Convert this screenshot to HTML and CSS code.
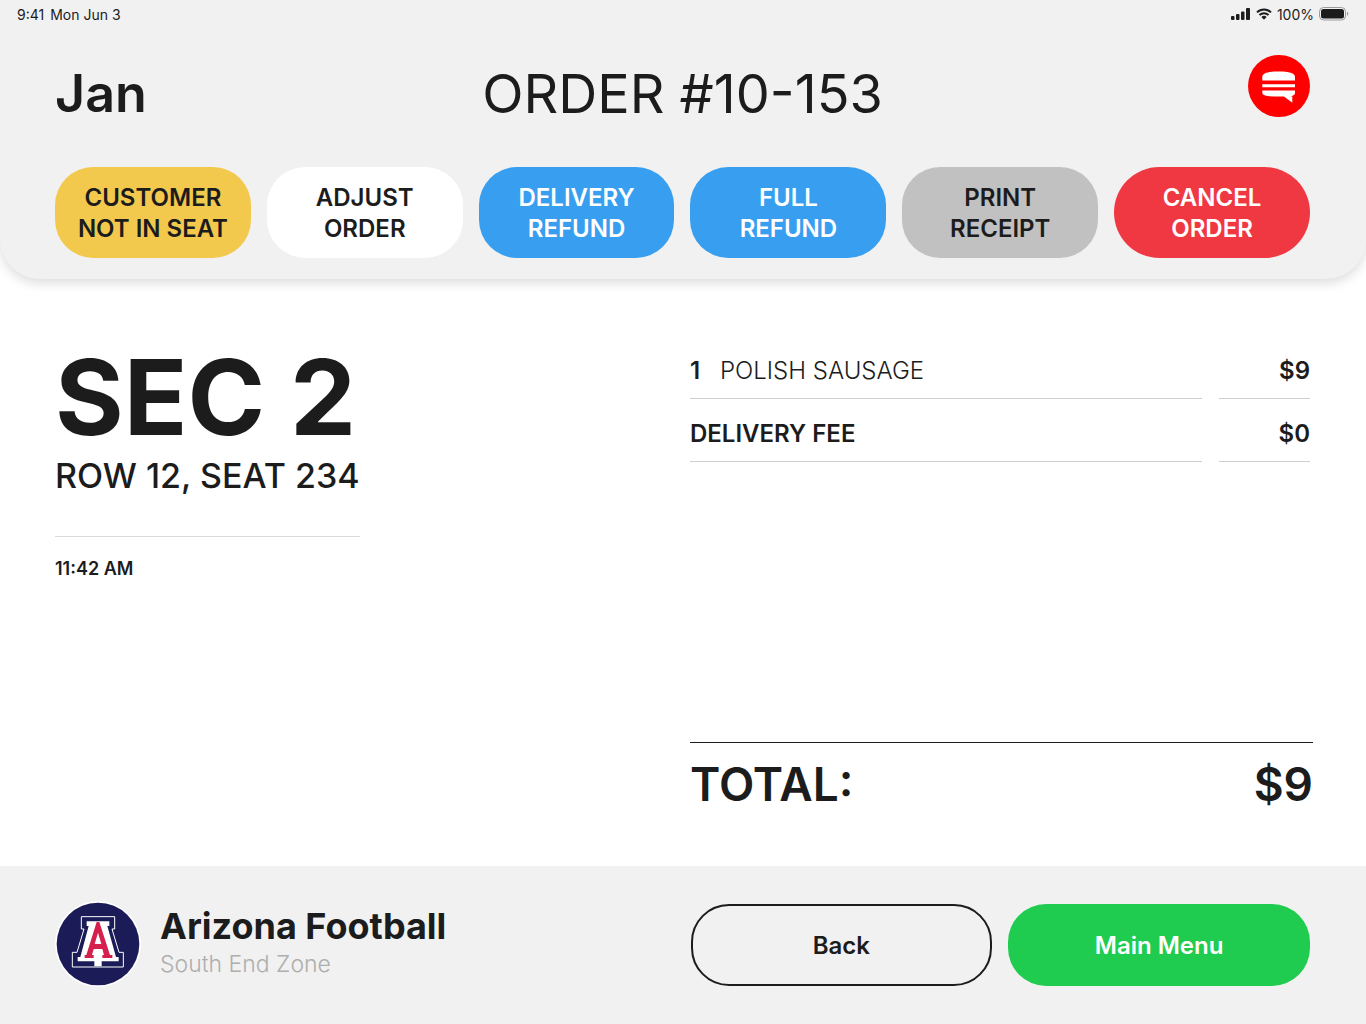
FILE: index.html
```html
<!DOCTYPE html>
<html lang="en">
<head>
<meta charset="utf-8">
<meta name="viewport" content="width=device-width, initial-scale=1">
<title>Order #10-153</title>
<link rel="stylesheet" href="styles.css">
</head>
<body>
<header class="header">
  <div class="status">
    <div class="status-group"><span>9:41</span><span>Mon Jun 3</span></div>
    <div class="status-group status-right">
      <svg class="signal" width="20" height="12" viewBox="0 0 20 12" aria-hidden="true">
        <rect x="0" y="8" width="3.500" height="4" rx="1"/><rect x="5" y="6" width="3.500" height="6" rx="1"/><rect x="10" y="3.500" width="3.500" height="8.500" rx="1"/><rect x="15" y="0" width="4" height="12" rx="1"/>
      </svg>
      <svg class="wifi" width="16" height="12" viewBox="0 0 16 12" aria-hidden="true">
        <path d="M1 4.4a10 10 0 0 1 14 0M3.5 7a6.4 6.4 0 0 1 9 0" fill="none" stroke="currentColor" stroke-width="2"/>
        <path d="M8 11.7 5.4 9a3.8 3.8 0 0 1 5.2 0z"/>
      </svg>
      <span>100%</span>
      <svg class="battery" width="30" height="14" viewBox="0 0 30 14" aria-hidden="true">
        <rect x=".5" y=".5" width="26" height="12.5" rx="4" fill="none" stroke="#9b9b9b"/>
        <rect x="2" y="2" width="23" height="9.500" rx="2.500"/>
        <path d="M28 4.7c1.8.6 1.8 3.5 0 4.1z" fill="#9b9b9b"/>
      </svg>
    </div>
  </div>
  <div class="title-row">
    <h1 class="customer">Jan</h1>
    <h2 class="order-number">ORDER #10-153</h2>
    <svg class="brand" width="62" height="62" viewBox="0 0 62 62" role="img" aria-label="Burger chat">
      <circle cx="31" cy="31" r="31" fill="#ff0000"/>
      <path fill="#fff" d="M14.3 25.500v-3.500c0-4 6-5.500 16.400-5.500S47 18 47 22v3.500zM14.300 29.200H47v3H14.300zM14.300 35.500H47v2c0 2.500-2 3.700-6.300 4.100H44.300V47.700L36 41.500C21 41.800 14.300 41.300 14.300 37.500z"/>
    </svg>
  </div>
  <div class="actions">
    <button class="action yellow" type="button">CUSTOMER<br>NOT IN SEAT</button>
    <button class="action white" type="button">ADJUST<br>ORDER</button>
    <button class="action blue" type="button">DELIVERY<br>REFUND</button>
    <button class="action blue" type="button">FULL<br>REFUND</button>
    <button class="action gray" type="button">PRINT<br>RECEIPT</button>
    <button class="action red" type="button">CANCEL<br>ORDER</button>
  </div>
</header>
<main class="main">
  <section class="location">
    <p class="section">SEC 2</p>
    <p class="seat">ROW 12, SEAT 234</p>
    <p class="time">11:42 AM</p>
  </section>
  <section class="bill">
    <table class="items">
      <tr><td class="name"><div class="cell"><b class="qty">1</b>POLISH SAUSAGE</div></td><td class="price"><div class="cell">$9</div></td></tr>
      <tr><td class="name fee"><div class="cell">DELIVERY FEE</div></td><td class="price"><div class="cell">$0</div></td></tr>
    </table>
    <div class="total"><span>TOTAL:</span><span>$9</span></div>
  </section>
</main>
<footer class="footer">
  <div class="venue">
    <svg class="team" width="86" height="86" viewBox="15 15 258 258" role="img" aria-label="Arizona">
      <circle cx="144" cy="144" r="129" fill="#fff"/>
      <circle cx="144" cy="144" r="124" fill="#1b1b58"/>
      <path d="M94 62H194V99H186L207 169H220V213H67V169H81L102 99H94Z" fill="none" stroke="#fff" stroke-width="3"/>
      <path d="M110 76H178V90H172L198 183H206V196H155V211H133V196H83V183H91L116 90H110Z" fill="#fff"/>
      <path fill="#d51f4c" fill-rule="evenodd" d="M140 78H148L180 177H187V186H157V177H162L157 159H131L126 177H131V186H104V177H109ZM144 110 134 144H154Z"/>
    </svg>
    <div>
      <p class="team-name">Arizona Football</p>
      <p class="zone">South End Zone</p>
    </div>
  </div>
  <nav class="nav">
    <button class="nav-button outline" type="button">Back</button>
    <button class="nav-button green" type="button">Main Menu</button>
  </nav>
</footer>
</body>
</html>
```
FILE: styles.css
```css
* { box-sizing: border-box; }
body {
  margin: 0;
  min-height: 100vh;
  display: flex;
  flex-direction: column;
  background: #fff;
  color: #1c1c1d;
  font-family: Inter, "Liberation Sans", sans-serif;
}
h1, h2, p { margin: 0; }
button { font: inherit; color: inherit; border: 0; padding: 0; cursor: pointer; }

.header {
  background: #f1f1f1;
  border-radius: 0 0 40px 40px;
  box-shadow: 0 4px 12px rgba(0, 0, 0, 0.14);
  padding-bottom: 21px;
}
.status {
  display: flex;
  justify-content: space-between;
  height: 28px;
  padding: 0 17px;
  font-size: 14px;
  font-weight: 400;
}
.status-group { display: flex; align-items: center; gap: 6px; }
.status-right { gap: 5px; }
.signal, .wifi, .battery { fill: currentColor; }

.title-row {
  display: grid;
  grid-template-columns: 1fr auto 1fr;
  padding: 27px 56px 0 55px;
  height: 139px;
}
.customer { font-size: 52px; font-weight: 600; line-height: 78px; }
.order-number { font-size: 54px; font-weight: 400; line-height: 78px; }
.brand { justify-self: end; }

.actions {
  display: grid;
  grid-template-columns: repeat(6, 1fr);
  gap: 16px;
  padding: 0 56px 0 55px;
}
.action {
  height: 91px;
  border-radius: 38px;
  font-size: 24px;
  font-weight: 600;
  line-height: 31px;
  white-space: nowrap;
}
.yellow { background: #f2c94c; }
.white { background: #fff; }
.blue { background: #389ff0; color: #fff; }
.gray { background: #c1c1c1; }
.red { background: #f03842; color: #fff; border-radius: 46px; }

.main {
  flex: 1;
  display: grid;
  grid-template-columns: 1fr 1fr;
  gap: 12px;
  padding: 57px 53px 52px 55px;
}
.location { width: fit-content; }
.section { font-size: 105px; font-weight: 700; line-height: 122px; }
.seat {
  font-size: 34px;
  font-weight: 500;
  line-height: 36px;
  padding-bottom: 42px;
  border-bottom: 1px solid #dadada;
}
.time { font-size: 18px; font-weight: 600; line-height: 24px; margin-top: 20px; }

.bill { display: flex; flex-direction: column; justify-content: space-between; }
.items { border-collapse: collapse; margin-right: 3px; font-size: 24px; }
.items td { padding: 0; }
.items .name { padding-right: 17px; font-weight: 300; }
.items .fee { font-weight: 600; }
.cell { height: 63px; padding-top: 10px; line-height: 50px; border-bottom: 1px solid #cfcfcf; }
.qty { display: inline-block; width: 30px; font-weight: 600; }
.items .price { width: 91px; text-align: right; font-weight: 600; }
.total {
  display: flex;
  justify-content: space-between;
  border-top: 1px solid #1c1c1d;
  padding-top: 11px;
  font-size: 46px;
  font-weight: 600;
  line-height: 60px;
}

.footer {
  display: grid;
  grid-template-columns: 1fr 1fr;
  gap: 16px;
  align-items: center;
  height: 158px;
  padding: 0 56px 0 55px;
  background: #f1f1f1;
}
.venue { display: flex; align-items: center; gap: 19px; padding-bottom: 2px; }
.team-name { font-size: 36px; font-weight: 700; line-height: 40px; }
.zone { font-size: 23px; font-weight: 300; line-height: 36px; color: #aeaeae; }
.nav { display: grid; grid-template-columns: 1fr 1fr; gap: 16px; }
.nav-button { height: 82px; border-radius: 38px; font-size: 24px; font-weight: 600; }
.outline { background: transparent; border: 2px solid #1c1c1d; }
.green { background: #20cc50; color: #fff; }
```
